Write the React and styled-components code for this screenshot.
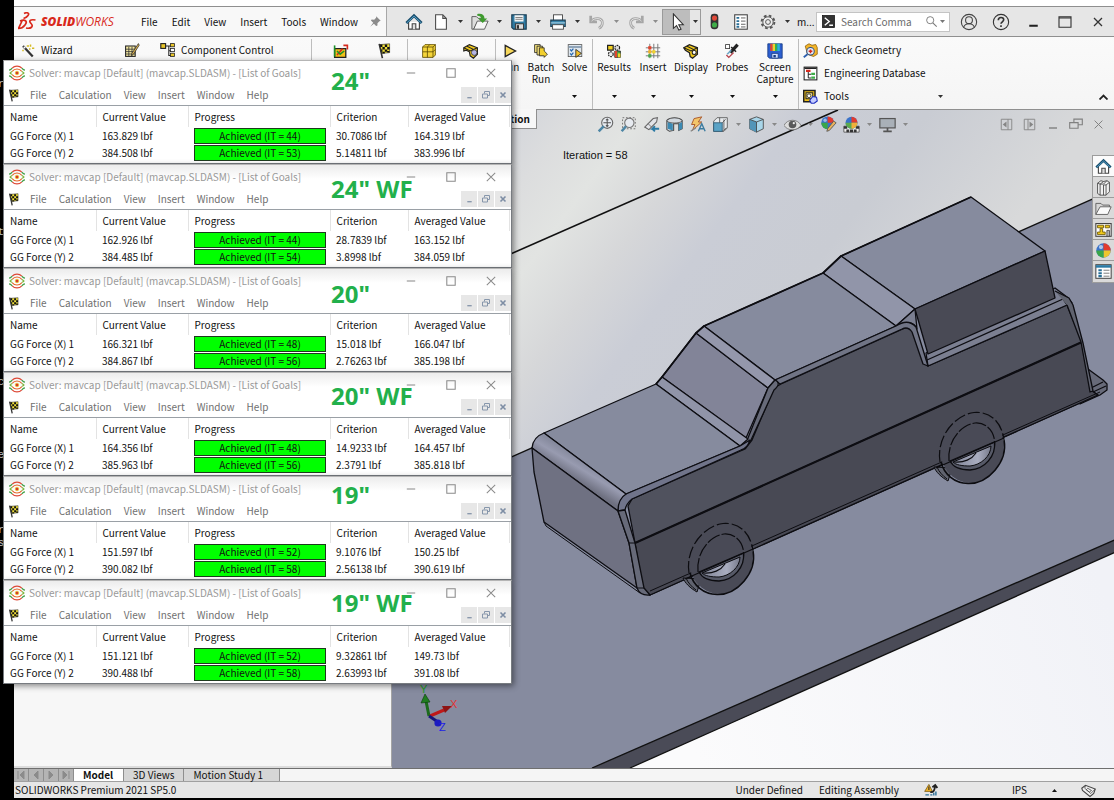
import React from "react";
import styled, { createGlobalStyle } from "styled-components";

const UI = '"Noto Sans CJK SC", "Open Sans", sans-serif';

const GlobalStyle = createGlobalStyle`
  *, *::before, *::after { box-sizing: border-box; }
  body { margin: 0; background: #000; font-family: ${UI}; color: #111; }
  button, input { font: inherit; color: inherit; }
`;

/* ---------- shared pieces ---------- */

const Bare = styled.button`
  display: inline-flex;
  align-items: center;
  justify-content: center;
  flex: none;
  padding: 0;
  border: 0;
  background: none;
  line-height: 12px;
  white-space: nowrap;
`;

const IconButton = styled(Bare)`
  width: ${(p) => p.$w || 24}px;
  height: ${(p) => p.$h || 26}px;
  background: ${(p) => p.$bg || "none"};
`;

const CaretButton = styled(Bare)`
  width: ${(p) => p.$w || 14}px;
  height: ${(p) => p.$h || 26}px;
  color: ${(p) => p.$tone || "#333"};
`;

const Svg = styled.svg`
  display: block;
  flex: none;
`;

const glyphs = {
  home: (
    <>
      <path d="M4 10v8h12v-8" fill="#fff" stroke="#444" strokeWidth="1.3" />
      <path d="M8 18v-6h4v6" fill="#ddd" stroke="#444" strokeWidth="1.2" />
      <path d="M1.5 11 10 3l8.500 8" fill="none" stroke="#1b4f6e" strokeWidth="3" />
      <path d="M2 11 10 3.500 18 11" fill="none" stroke="#5aa7cf" strokeWidth="1" />
    </>
  ),
  page: <path d="M4 2h8l4 4v12H4zM12 2v4h4" fill="#fff" stroke="#4a4a4a" strokeWidth="1.2" />,
  open: (
    <>
      <path d="M1 4h5l2 2h3v4H7l-4 8H1z" fill="#ddd" stroke="#555" />
      <path d="M3 18 7 9h12l-4 9z" fill="#f6f6f6" stroke="#555" />
      <path d="M7 1c5-1 8 1 8 5h3l-5 5-5-5h3c0-2-1-3-4-3z" fill="#3f9b2f" />
    </>
  ),
  save: (
    <>
      <path d="M2 2h16v16H4l-2-2z" fill="#2f7ba3" stroke="#1d3f54" strokeWidth="1.3" />
      <rect x="5" y="2.500" width="10" height="7" fill="#f4f4f4" />
      <path d="M6 5h8M6 7h8" stroke="#777" />
      <rect x="6" y="12" width="9" height="6" fill="#ddd" stroke="#333" />
      <rect x="7.500" y="13.500" width="2.500" height="4" fill="#333" />
    </>
  ),
  print: (
    <>
      <rect x="5" y="2" width="10" height="7" fill="#fff" stroke="#444" />
      <path d="M2 8h16v7H2z" fill="#3a86ad" stroke="#1d3f54" strokeWidth="1.3" />
      <path d="M2 11h16" stroke="#bfe0ee" />
      <rect x="4" y="13" width="12" height="5" fill="#fff" stroke="#444" />
    </>
  ),
  undo: (
    <>
      <path d="M3 3v7h7M4 9c3-4 12-4 12 2 0 3-2 5-4 6" fill="none" stroke="#a6a6a6" strokeWidth="3" />
      <path d="M4 9c3-4 12-4 12 2 0 3-2 5-4 6" fill="none" stroke="#e6e6e6" strokeWidth="1" />
    </>
  ),
  redo: (
    <>
      <path d="M17 3v7h-7M16 9C13 5 4 5 4 11c0 3 2 5 4 6" fill="none" stroke="#a6a6a6" strokeWidth="3" />
      <path d="M16 9C13 5 4 5 4 11c0 3 2 5 4 6" fill="none" stroke="#e6e6e6" strokeWidth="1" />
    </>
  ),
  cursor: <path d="M6 1v16l3.500-3 2.500 5 2.500-1-2.500-5H17z" fill="#fff" stroke="#333" strokeWidth="1.200" />,
  traffic: (
    <>
      <rect x="5.500" y="1" width="9" height="18" rx="4" fill="#333" />
      <circle cx="10" cy="6" r="3" fill="#e04a3a" />
      <circle cx="10" cy="14" r="3" fill="#3fae49" />
    </>
  ),
  list: (
    <>
      <rect x="3" y="2" width="14" height="16" fill="#fff" stroke="#444" strokeWidth="1.2" />
      <path d="M5 5.500h3M5 9h3M5 12.500h3M5 15.500h3" stroke="#2a6f97" strokeWidth="2" />
      <path d="M10 5.500h5M10 9h5M10 12.500h5M10 15.500h5" stroke="#555" />
    </>
  ),
  gear: (
    <>
      <circle cx="10" cy="10" r="8" fill="none" stroke="#555" strokeWidth="2.400" strokeDasharray="3.400 2.880" />
      <circle cx="10" cy="10" r="6.500" fill="#eee" stroke="#555" strokeWidth="1.200" />
      <circle cx="10" cy="10" r="3" fill="none" stroke="#555" strokeWidth="1.200" />
    </>
  ),
  pin: <path d="M11 2l7 7-2 .5-3 3 0 3.500-2 1-3.500-3.500L2 18l4.500-6L3 8.500 4 7l4 .2 3-3z" fill="#8b8b8b" />,
  search: (
    <>
      <circle cx="8" cy="8" r="5.500" fill="none" stroke="#777" strokeWidth="1.400" />
      <path d="M12 12l6 6" stroke="#777" strokeWidth="1.600" />
    </>
  ),
  prompt: (
    <>
      <rect x="2" y="2" width="16" height="16" fill="#333" stroke="#111" />
      <path d="M5 5l6 5-6 5M11 15h5" fill="none" stroke="#fff" strokeWidth="1.800" />
    </>
  ),
  user: (
    <>
      <circle cx="10" cy="10" r="8.500" fill="none" stroke="#444" strokeWidth="1.200" />
      <circle cx="10" cy="8" r="3.800" fill="none" stroke="#444" strokeWidth="1.200" />
      <path d="M4 16c1-3 3-4 6-4s5 1 6 4" fill="none" stroke="#444" strokeWidth="1.200" />
    </>
  ),
  help: (
    <>
      <circle cx="10" cy="10" r="8.500" fill="none" stroke="#333" strokeWidth="1.200" />
      <path d="M7 8c0-4 6-4 6-.5 0 2-3 2.500-3 4.500M10 13.500v2" fill="none" stroke="#333" strokeWidth="1.800" />
    </>
  ),
  minimize: <path d="M5 15h10" stroke="#222" strokeWidth="2.400" />,
  maximize: <path d="M2.500 3.500h15v13h-15zM2.500 5h15" fill="none" stroke="#333" strokeWidth="1.400" />,
  close: <path d="M5 5l10 10M15 5 5 15" stroke="#333" strokeWidth="1.600" />,
  wand: (
    <>
      <path d="M4 4l13 14" stroke="#333" strokeWidth="3" />
      <path d="M5 5l2 2" stroke="#fff" strokeWidth="2" />
      <path d="M9 4h3M14 2v3M16 7h3M12 8h2M3 10h2" stroke="#d4ba22" strokeWidth="2" />
    </>
  ),
  notes: (
    <>
      <rect x="2" y="5" width="12" height="13" fill="#f4e8a0" stroke="#222" strokeWidth="1.300" />
      <path d="M2 9h12M2 12h12M2 15h12M6 6v12M10 6v12" stroke="#333" />
      <path d="M18 2 10 14l-1 3 3-2 7-11z" fill="#e6b84a" stroke="#333" />
    </>
  ),
  tree: (
    <>
      <path d="M7 5h6M11 5v12h3M11 11h3" fill="none" stroke="#222" strokeWidth="1.300" />
      <rect x="1" y="2" width="6" height="6" fill="#e8c52a" stroke="#222" strokeWidth="1.400" />
      <rect x="13" y="2" width="5" height="4" fill="#e8c52a" stroke="#222" />
      <rect x="13" y="8" width="5" height="4" fill="#fff" stroke="#222" />
      <rect x="13" y="14" width="5" height="4" fill="#e8c52a" stroke="#222" />
    </>
  ),
  boxArrow: (
    <>
      <path d="M2 7h14v11H2z" fill="#f2c218" stroke="#222" strokeWidth="1.600" />
      <path d="M2 3v14" stroke="#1b8f2a" strokeWidth="2" />
      <path d="M5 15l7-8M13 3h5v5" fill="none" stroke="#d62a1e" strokeWidth="2" />
      <path d="M5 10l4 4 5-4" fill="none" stroke="#1b8f2a" strokeWidth="2" />
    </>
  ),
  flag: (
    <>
      <path d="M5 2l12-1v11L7 13z" fill="#f0e03a" stroke="#333" strokeWidth=".8" />
      <path d="M5 2h3v3H5zM11 2h3v3h-3zM8 5h3v3H8zM14 5h3v3h-3zM6 8h2v3H6zM11 8h3v3h-3zM8 11h3v2H8zM14 10h3v2h-3z" fill="#111" />
      <path d="M4 1l4 18" stroke="#333" strokeWidth="2" />
    </>
  ),
  mesh: (
    <>
      <path d="M2 5l3-3h13v13l-3 3H2z" fill="#f5d53a" stroke="#5c4a00" />
      <path d="M2 5h13v13M15 5l3-3M2 11h13l3-3M8 5v13M8 5l3-3" fill="none" stroke="#5c4a00" />
    </>
  ),
  part: (
    <>
      <path d="M1 6l7-4 10 4v8l-5 5-4-3-1-5-4-2-3 1z" fill="#f0c91c" stroke="#222" strokeWidth="1.500" />
      <path d="M1 6l8 4 9-4M5 4l8 4" fill="none" stroke="#222" strokeWidth="1.300" />
      <circle cx="14" cy="12" r="3.500" fill="#b4b4e4" stroke="#333" />
    </>
  ),
  play: <path d="M4 3l13 7-13 7z" fill="#f6d75a" stroke="#222" strokeWidth="1.600" />,
  batch: (
    <>
      <path d="M2 2h7v10H2z" fill="#f6e27a" stroke="#222" />
      <path d="M5 4h7v11H5z" fill="#f6e27a" stroke="#222" />
      <path d="M8 6h6v4l4 4-4 4v-2H8z" fill="#f2cf2e" stroke="#222" />
    </>
  ),
  solve: (
    <>
      <rect x="1.500" y="2" width="17" height="15" fill="#dfe7ee" stroke="#555" />
      <path d="M2 5h16" stroke="#7b93aa" strokeWidth="2" />
      <path d="M4 8l1.500 2L8 7M4 13l1.500 2L8 12" fill="none" stroke="#2467b0" strokeWidth="1.500" />
      <path d="M11 8l7 5-7 5z" fill="#f2bf2a" stroke="#222" />
    </>
  ),
  results: (
    <>
      <path d="M2 3h7v6H2z" fill="#f0cf22" stroke="#222" strokeWidth="1.500" />
      <circle cx="14" cy="6" r="3" fill="#ddd" stroke="#222" strokeWidth="1.500" strokeDasharray="2 1" />
      <circle cx="6" cy="14" r="3" fill="#eee" stroke="#222" strokeWidth="1.500" strokeDasharray="2 1" />
      <path d="M11 10h7v8h-7z" fill="#3fae49" stroke="#222" />
      <path d="M11 10h3v8h-3z" fill="#e2442e" />
      <path d="M15 13h3v5h-3z" fill="#f2d22a" />
    </>
  ),
  grid: (
    <>
      <path d="M1 6h18M1 11h18M1 16h18M6 1v18M11 1v18M16 1v18" stroke="#777" strokeWidth="1.200" />
      <path d="M4 4h4v4H4z" fill="#e2442e" />
      <path d="M4 9h4v4H4z" fill="#f2b52a" />
      <path d="M9 9h4v4H9z" fill="#f2d22a" />
      <path d="M4 14h4v4H4z" fill="#4aa84a" />
    </>
  ),
  block: (
    <>
      <path d="M1 6l7-4 10 4v8l-6 5-3-2-1-5-5-3z" fill="#f0c91c" stroke="#222" strokeWidth="1.600" />
      <path d="M1 6l9 4 8-4M5 4l8 4" fill="none" stroke="#222" strokeWidth="1.300" />
      <circle cx="14" cy="12" r="2.500" fill="#fff" stroke="#222" strokeWidth="1.300" />
    </>
  ),
  probe: (
    <>
      <path d="M17 2l-9 10" stroke="#222" strokeWidth="4" />
      <path d="M9 5l6 6" stroke="#222" strokeWidth="2" />
      <path d="M9 9l-5 5" stroke="#6aa5c4" strokeWidth="2" />
      <rect x="2" y="2" width="5" height="5" fill="#fff" stroke="#333" />
      <path d="M3 15l3 3 6-6" fill="none" stroke="#b6404a" strokeWidth="1.600" />
    </>
  ),
  floppy: (
    <>
      <path d="M1 1h18v18H3l-2-2z" fill="#2c5fd0" stroke="#173a80" />
      <path d="M4 1h3v9H4z" fill="#e2442e" />
      <path d="M7 1h3v9H7z" fill="#f2d22a" />
      <path d="M10 1h3v9h-3z" fill="#35b04a" />
      <path d="M13 1h3v9h-3z" fill="#29b6d8" />
      <path d="M6 13h8v6H6z" fill="#cfe0ff" stroke="#173a80" />
      <path d="M8 15h3v3H8z" fill="#173a80" />
    </>
  ),
  checkGeometry: (
    <>
      <path d="M3 4l5-3 4 2 5-1 2 4v9l-5 3-8-3z" fill="#f2b52a" stroke="#8a5a00" />
      <circle cx="10" cy="11" r="5" fill="#e8eef6" stroke="#2d4f80" strokeWidth="1.400" />
      <path d="M7.500 11h5M10 8.500v5" stroke="#d62a1e" strokeWidth="2" />
      <path d="M6 15l-5 4" stroke="#2d5fb0" strokeWidth="2.400" />
    </>
  ),
  database: (
    <>
      <rect x="1.500" y="1.500" width="17" height="17" fill="#fff" stroke="#222" strokeWidth="1.400" />
      <path d="M2 3h16" stroke="#222" strokeWidth="2" />
      <path d="M7 7v9h4M7 11h4" stroke="#222" fill="none" strokeWidth="1.300" />
      <path d="M4 5h6v3H4z" fill="#d62a1e" />
      <path d="M11 9h5v3h-5z" fill="#3fae49" />
      <path d="M11 14h5v3h-5z" fill="#3fae49" />
    </>
  ),
  toolbox: (
    <>
      <path d="M1 2h15v15H1z" fill="#f0c018" stroke="#222" strokeWidth="2" />
      <rect x="4" y="5" width="9" height="8" fill="#e9d98a" stroke="#222" strokeWidth="1.300" />
      <circle cx="8" cy="9" r="2.500" fill="#fff" stroke="#222" />
      <path d="M9 15l4-5 5 1 1 5-4 3h-4z" fill="#c4ccff" stroke="#2030c0" strokeWidth="1.500" />
    </>
  ),
  zoomFit: (
    <>
      <circle cx="12" cy="8" r="6.500" fill="#e7ebf0" stroke="#666" strokeWidth="1.300" />
      <path d="M8 12l-6 6" stroke="#4d86a5" strokeWidth="3" />
      <path d="M12 3.500v9M7.500 8h9M10.500 5 12 3.500 13.500 5M10.500 11l1.500 1.500 1.500-1.500" fill="none" stroke="#555" strokeWidth="1.200" />
    </>
  ),
  zoomArea: (
    <>
      <rect x="3" y="2" width="15" height="13" fill="none" stroke="#666" strokeDasharray="2 2" />
      <circle cx="11" cy="8" r="5.500" fill="#e7ebf0" stroke="#777" strokeWidth="1.300" />
      <path d="M7 12l-5 6" stroke="#4d86a5" strokeWidth="3" />
    </>
  ),
  previous: (
    <>
      <path d="M2 13 12 3l5-1-1 5-9 9z" fill="#e2e4e8" stroke="#666" strokeWidth="1.200" />
      <path d="M6 9l4 4" stroke="#666" />
      <path d="M19 15h-8l3-3M11 15l3 3" fill="none" stroke="#2b7aa5" strokeWidth="2.200" />
    </>
  ),
  section: (
    <>
      <path d="M1 5c4-4 14-4 18 0v10l-4 2V9H9v8l-5 1-3-2z" fill="#d2d9df" stroke="#444" strokeWidth="1.200" />
      <path d="M2 7l6 2v8l-6-2z" fill="#3b8ab3" />
      <path d="M15 9l4-2v8l-4 2z" fill="#3b8ab3" />
      <path d="M1 6c3 3 15 3 18 0" fill="none" stroke="#555" />
    </>
  ),
  dynamic: (
    <>
      <path d="M6 3l9-2-4 6h4L4 17l3-7H3z" fill="#f3c56a" stroke="#a24a20" strokeWidth="1" />
      <path d="M11 18l4-9 4 9M12 15h5" fill="none" stroke="#3b7ba0" strokeWidth="1.600" />
      <path d="M2 18l6-4" stroke="#888" strokeWidth="1.600" />
    </>
  ),
  viewBox: (
    <>
      <path d="M2 6l4-4h12v12l-4 4H2z" fill="#e8ebee" stroke="#555" />
      <rect x="2" y="8" width="10" height="10" fill="#5aa3c6" stroke="#2b5a75" />
      <path d="M12 8l4-4M12 18l5-4M9 2v6M14 4v12" stroke="#555" fill="none" />
    </>
  ),
  cube: (
    <>
      <path d="M2 4l8-3 8 3v11l-8 4-8-4z" fill="#a9d6ea" stroke="#444" />
      <path d="M2 4l8 3v12l-8-4z" fill="#5295b8" />
      <path d="M2 4l8 3 8-3M10 7v12" fill="none" stroke="#444" />
    </>
  ),
  eye: (
    <>
      <path d="M0 11c4-8 16-8 20 0-4 7-16 7-20 0z" fill="#ddd" stroke="#777" />
      <circle cx="10" cy="10" r="4.500" fill="#5a5a5a" />
      <circle cx="11.500" cy="8.500" r="1.300" fill="#eee" />
    </>
  ),
  ball: (
    <>
      <circle cx="10" cy="10" r="8.500" fill="#3a73c9" />
      <path d="M10 10V1.500a8.500 8.500 0 0 1 8.500 8.500z" fill="#e23a2e" />
      <path d="M10 10h8.500a8.500 8.500 0 0 1-8.500 8.500z" fill="#efc62c" />
      <path d="M10 10v8.500a8.500 8.500 0 0 1-8.500-8.500z" fill="#3aa648" />
      <circle cx="7" cy="6" r="2.500" fill="#fff" opacity=".6" />
    </>
  ),
  ballPen: (
    <>
      <circle cx="9" cy="8" r="7.500" fill="#3a73c9" />
      <path d="M9 8V.5A7.500 7.500 0 0 1 16.500 8z" fill="#e23a2e" />
      <path d="M9 8v7.500A7.500 7.500 0 0 1 1.500 8z" fill="#3aa648" />
      <circle cx="6" cy="5" r="2" fill="#fff" opacity=".5" />
      <path d="M19 8 11 17l-3 1 1-3 7-9z" fill="#e9b25c" stroke="#555" />
    </>
  ),
  ballScene: (
    <>
      <path d="M1 12h18v7H1z" fill="#eee" stroke="#555" />
      <path d="M1 12h4v3H1zM8 16h4v3H8zM15 12h4v3h-4zM4 16h3v3H4zM13 16h3v3h-3z" fill="#333" />
      <circle cx="10" cy="8" r="7" fill="#3a73c9" />
      <path d="M10 8V1a7 7 0 0 1 7 7z" fill="#e23a2e" />
      <path d="M3 8h14a7 7 0 0 1-14 0z" fill="#5caa4c" />
      <path d="M10 8h7a7 7 0 0 1-7 7z" fill="#efb03c" />
    </>
  ),
  monitor: (
    <>
      <rect x="1" y="3" width="18" height="11" fill="#a9b0b8" stroke="#555" strokeWidth="1.400" />
      <path d="M10 14v4M5 18h10" stroke="#555" strokeWidth="2" />
    </>
  ),
  paneLeft: (
    <>
      <path d="M3 3h14v14H3zM12 3v14" fill="none" stroke="#858585" strokeWidth="1.200" />
      <path d="M10 6l-5 4 5 4z" fill="#858585" />
    </>
  ),
  paneRight: (
    <>
      <path d="M3 3h14v14H3zM8 3v14" fill="none" stroke="#858585" strokeWidth="1.200" />
      <path d="M10 6l5 4-5 4z" fill="#858585" />
    </>
  ),
  docMin: <path d="M5 15h10" stroke="#777" strokeWidth="1.600" />,
  restore: <path d="M7 8V3h12v8h-6M1 8h12v8H1z" fill="none" stroke="#808080" strokeWidth="1.600" />,
  docClose: <path d="M4 4l12 12M16 4 4 16" stroke="#808080" strokeWidth="1.500" />,
  books: (
    <>
      <path d="M3 5l4-3 3 1 4-1 3 2v11l-4 4H6l-3-2z" fill="#f1f1f1" stroke="#444" />
      <path d="M6 6v13M3 5l3 1 4-3M10 7v12M6 6h4l4-4M13 7v12M10 7l3 0 4-3" fill="none" stroke="#444" />
    </>
  ),
  folder: (
    <>
      <path d="M1 17V4h6l2 2h8v3" fill="#d6d6d6" stroke="#555" />
      <path d="M1 17 6 8h13l-4 9z" fill="#fafafa" stroke="#555" />
    </>
  ),
  palette: (
    <>
      <rect x="1" y="3" width="18" height="15" fill="#fff" stroke="#444" strokeWidth="1.300" />
      <path d="M3 5h7v3H3zM12 5h5v3h-5zM6 9h3v4h3v3H3v-3h3z" fill="#f0c91c" stroke="#6b5600" />
      <path d="M14 11h3v7h-3z" fill="#bbb" stroke="#444" />
    </>
  ),
  properties: (
    <>
      <rect x="1" y="2" width="18" height="16" fill="#fff" stroke="#444" strokeWidth="1.200" />
      <path d="M1 4h18" stroke="#2a7aa5" strokeWidth="3" />
      <path d="M4 8.500h4M4 12h4M4 15.500h4" stroke="#2a6f97" strokeWidth="2.500" />
      <path d="M10 8.500h7M10 12h7M10 15.500h7" stroke="#666" />
    </>
  ),
  goals: (
    <>
      <path d="M4 4c3-3.500 9-3.500 12 0M4 16c3 3.500 9 3.500 12 0" fill="none" stroke="#dd4a38" strokeWidth="1.600" />
      <path d="M0 6.500c2 0 2 0 4-2.500M20 6.500c-2 0-2 0-4-2.500M0 13.500c2 0 2 0 4 2.500M20 13.500c-2 0-2 0-4 2.500" fill="none" stroke="#3f9f46" strokeWidth="1.600" />
      <path d="M4 8c3-4 9-4 12 0M4 12c3 4 9 4 12 0" fill="none" stroke="#e4662c" strokeWidth="1.400" />
      <path d="M1 10c1-1 2-1 3-2M19 10c-1-1-2-1-3-2M1 10c1 1 2 1 3 2M19 10c-1 1-2 1-3 2" fill="none" stroke="#7fb53c" strokeWidth="1.400" />
      <circle cx="10" cy="10" r="2.200" fill="#d7382c" stroke="#e9c52c" />
    </>
  ),
  childMin: <path d="M6 14h8" stroke="#8696ab" strokeWidth="2.400" />,
  childRestore: <path d="M7 7V3h10v8h-4M3 8h10v8H3z" fill="none" stroke="#8696ab" strokeWidth="2" />,
  childClose: <path d="M5 5l10 10M15 5 5 15" stroke="#7d8da4" strokeWidth="3.200" />,
  thinMin: <path d="M3 10h14" stroke="#8a8a8a" strokeWidth="1.700" />,
  thinMax: <path d="M4 4h12v12H4z" fill="none" stroke="#8a8a8a" strokeWidth="1.500" />,
  thinClose: <path d="M3 3l14 14M17 3 3 17" stroke="#8a8a8a" strokeWidth="1.700" />,
  rebuild: (
    <>
      <path d="M1 12 7 2l5 10z" fill="#f2b52a" stroke="#6a4a00" />
      <path d="M7 5v5" stroke="#222" strokeWidth="1.500" />
      <path d="M9 13c5 1 6-3 7-9M12 6l4-3 3 4" fill="none" stroke="#222" strokeWidth="2.600" />
      <path d="M2 17h5M9 17h3M14 14v4M17 12v6" stroke="#2a6f97" strokeWidth="2" />
    </>
  ),
  tag: (
    <>
      <path d="M1 7l5-4 13 5-2 6-5 4L2 10z" fill="#eee" stroke="#444" strokeWidth="1.400" />
      <path d="M6 3l-1 4 8 7 6-6M9 7l5 3-3 2-4-3z" fill="none" stroke="#444" />
    </>
  ),
};

const Glyph = ({ name, size = 18 }) => (
  <Svg width={size} height={size} viewBox="0 0 20 20" aria-hidden="true">
    {glyphs[name]}
  </Svg>
);

const Caret = ({ up }) => (
  <Svg width="5" height="3" viewBox="0 0 5 3" aria-hidden="true">
    <path d={up ? "M0 3h5L2.500 0z" : "M0 0h5L2.500 3z"} fill="currentColor" />
  </Svg>
);

/* ---------- frame ---------- */

const Desktop = styled.div`
  position: relative;
  min-height: 100vh;
  padding: 0 0 2px 14px;
  background: #000;
  font-size: 10px;
  line-height: 12px;
`;

const Frame = styled.div`
  display: flex;
  flex-direction: column;
  min-height: calc(100vh - 2px);
  background: #f7f7f7;
`;

const TopStrip = styled.div`
  height: 6px;
  background: #fff;
`;

const TitleBar = styled.header`
  display: flex;
  align-items: center;
  height: 31px;
  border-top: 1px solid #8f8f8f;
  border-bottom: 1px solid #8f8f8f;
  background: #e6e6e6;
`;

const Brand = styled.div`
  display: flex;
  align-items: center;
  align-self: stretch;
  width: 373px;
  flex: none;
  padding-left: 4px;
  border-right: 1px solid #a8a8a8;
  background: #f8f8f8;
`;

const Wordmark = styled.div`
  width: 80px;
  margin-left: 4px;
  font: italic 400 12px/16px "Open Sans", sans-serif;
  color: #d9291c;
  b { font-weight: 800; }
`;

const MenuBar = styled.nav`
  display: flex;
  gap: ${(p) => p.$gap}px;
  padding-left: ${(p) => p.$start}px;
`;

const PinButton = styled(Bare)`
  margin-left: auto;
  width: 22px;
`;

const Tools = styled.div`
  display: flex;
  align-items: center;
  flex: 1;
  min-width: 0;
  padding-left: 15px;
`;

const ToolGroup = styled.div`
  display: flex;
  margin-right: ${(p) => (p.$gap === undefined ? 1 : p.$gap)}px;
  border: ${(p) => (p.$boxed ? "1px solid #9a9a9a" : "0")};
`;

const DocTitle = styled.div`
  flex: 1;
  min-width: 0;
  padding-left: 3px;
  white-space: nowrap;
`;

const SearchBox = styled.label`
  display: flex;
  align-items: center;
  gap: 2px;
  width: 134px;
  height: 20px;
  flex: none;
  padding: 0 4px;
  margin-right: 3px;
  border: 1px solid #c4c4c4;
  background: #fff;
  color: #777;
  input {
    flex: 1;
    min-width: 0;
    padding: 0 0 0 3px;
    border: 0;
    outline: 0;
    background: none;
    &::placeholder { color: #6b6b6b; opacity: 1; }
  }
`;

/* ---------- ribbon ---------- */

const Ribbon = styled.div`
  display: flex;
  height: 73px;
  flex: none;
  padding-top: 2px;
  border-bottom: 1px solid #8f8f8f;
  background: linear-gradient(#fafafa, #f5f5f5);
`;

const RibbonGroup = styled.div`
  display: flex;
  flex: none;
  width: ${(p) => p.$w}px;
  padding-left: ${(p) => p.$pad || 0}px;
  border-right: 1px solid #bdbdbd;
`;

const RibbonRow = styled(Bare)`
  gap: ${(p) => p.$gap || 5}px;
  height: 22px;
  justify-content: flex-start;
  width: ${(p) => (p.$w ? p.$w + "px" : "auto")};
`;

const RibbonTile = styled(Bare)`
  flex-direction: column;
  justify-content: flex-start;
  width: ${(p) => p.$w}px;
  height: 68px;
  padding-top: 4px;
  gap: 2px;
  white-space: normal;
`;

const TileLabel = styled.span`
  height: 24px;
  margin-bottom: 8px;
  text-align: center;
`;

const RibbonList = styled.div`
  display: flex;
  flex-direction: column;
  gap: 1px;
  padding-left: 4px;
`;

const ToolsRow = styled.div`
  display: flex;
  justify-content: space-between;
  width: 142px;
`;

const Collapse = styled(Bare)`
  align-self: flex-end;
  width: 22px;
  height: 24px;
  margin-left: auto;
`;

/* ---------- workspace ---------- */

const Workspace = styled.main`
  position: relative;
  display: flex;
  flex: 1;
  min-height: 640px;
`;

const FeaturePane = styled.aside`
  width: 378px;
  flex: none;
  border-right: 1px solid #a5a5a5;
  border-bottom: 2px solid #dcdcdc;
  background: #f7f7f7;
`;

const RibbonTab = styled.button`
  position: absolute;
  top: -1px;
  left: 422px;
  width: 101px;
  height: 20px;
  padding: 0 6px;
  border: 1px solid #8f8f8f;
  border-top: 0;
  background: #f7f7f7;
  font-weight: 700;
  text-align: right;
  white-space: nowrap;
`;

const Viewport = styled.section`
  position: relative;
  flex: 1;
  min-width: 0;
  overflow: hidden;
`;

const Scene = styled.svg`
  position: absolute;
  inset: 0;
  width: 100%;
  height: 100%;
`;

const HeadsUp = styled.div`
  position: relative;
  display: flex;
  align-items: center;
  height: 28px;
  padding: 0 4px 0 202px;
`;

const DocControls = styled.div`
  display: flex;
  margin-left: auto;
`;

const Iteration = styled.div`
  position: relative;
  padding: 11px 0 0 171px;
  font: 11px/12px "Liberation Sans", Arial, sans-serif;
  color: #111;
`;

const TaskPane = styled.div`
  position: absolute;
  top: 45px;
  right: 0;
  display: flex;
  flex-direction: column;
  width: 22px;
  border: 1px solid #9c9c9c;
  border-right: 0;
`;

const TaskButton = styled(Bare)`
  height: 21px;
  border-bottom: 1px solid #9c9c9c;
  background: ${(p) => (p.$active ? "#fbfbfb" : "#dadada")};
  &:last-child { border-bottom: 0; }
`;

/* ---------- bottom bars ---------- */

const TabStrip = styled.div`
  display: flex;
  height: 14px;
  flex: none;
  border-top: 1px solid #6f6f6f;
  border-bottom: 1px solid #a0a0a0;
  background: #f5f5f5;
`;

const Pager = styled(Bare)`
  width: 15px;
  border-right: 1px solid #8e8e8e;
  background: #b4b4b4;
  color: #8b8b8b;
`;

const SheetTab = styled(Bare)`
  justify-content: flex-start;
  min-width: ${(p) => p.$w}px;
  padding: 0 9px;
  border-right: 1px solid #8e8e8e;
  background: ${(p) => (p.$active ? "#fff" : "#d6d6d6")};
  font-weight: ${(p) => (p.$active ? 700 : 400)};
`;

const StatusBar = styled.footer`
  display: flex;
  align-items: center;
  height: 16px;
  flex: none;
  padding: 0 4px 0 1px;
  background: #e6e6e6;
`;

const StatusItem = styled.span`
  margin-left: ${(p) => p.$ml || 0}px;
`;

const Spacer = styled.span`
  flex: 1;
`;

/* ---------- solver windows ---------- */

const SolverStack = styled.div`
  position: absolute;
  top: 60px;
  left: 3px;
  width: 509px;
`;

const SolverWindow = styled.section`
  position: relative;
  height: 104px;
  border: 1px solid #777b80;
  border-top-color: #b5b5b5;
  background: #fff;
  box-shadow: 2px 2px 6px rgba(0, 0, 0, 0.45);
`;

const SolverTitle = styled.div`
  display: flex;
  align-items: center;
  height: 24px;
  padding-left: 5px;
  color: #999;
  background: ${(p) => (p.$shaded ? "linear-gradient(#ececec, #fff 14px)" : "#fff")};
`;

const TitleText = styled.h2`
  flex: 1;
  margin: 0 0 0 4px;
  font-size: 10px;
  line-height: 12px;
  font-weight: 400;
  white-space: nowrap;
`;

const SolverMenu = styled.div`
  display: flex;
  align-items: center;
  height: 21px;
  padding-left: 3px;
  border-bottom: 1px solid #9aa0a6;
  color: #707070;
`;

const ChildButtons = styled.div`
  display: flex;
  gap: 1px;
  margin-left: auto;
`;

const GoalTable = styled.table`
  width: 505px;
  table-layout: fixed;
  border-collapse: collapse;
  color: #111;
  th, td { padding: 0 0 0 6px; text-align: left; font-weight: 400; white-space: nowrap; }
  th { height: 21px; border-right: 1px solid #e3e3e3; }
  td { height: 17px; }
`;

const Progress = styled.div`
  width: 132px;
  height: 16px;
  border: 1px solid #1d3a1d;
  background: #00ff00;
  line-height: 13px;
  text-align: center;
`;

const Annotation = styled.div`
  position: absolute;
  top: ${(p) => p.$top}px;
  left: 327px;
  font: 700 24px/24px "Noto Sans", "Open Sans", sans-serif;
  color: #22b04b;
`;

const EdgeText = styled.div`
  position: absolute;
  top: ${(p) => p.$y}px;
  left: 0;
  width: 4px;
  overflow: hidden;
  direction: rtl;
  color: #cfcfcf;
  font: 10px/12px "Liberation Mono", monospace;
`;

const runs = [
  { label: '24"', top: 8, rows: [["163.829", "44", "30.7086", "164.319"], ["384.508", "53", "5.14811", "383.996"]] },
  { label: '24" WF', top: 12, rows: [["162.926", "44", "28.7839", "163.152"], ["384.485", "54", "3.8998", "384.059"]] },
  { label: '20"', top: 13, rows: [["166.321", "48", "15.018", "166.047"], ["384.867", "56", "2.76263", "385.198"]] },
  { label: '20" WF', top: 11, rows: [["164.356", "48", "14.9233", "164.457"], ["385.963", "56", "2.3791", "385.818"]] },
  { label: '19"', top: 6, rows: [["151.597", "52", "9.1076", "150.25"], ["390.082", "58", "2.56138", "390.619"]] },
  { label: '19" WF', top: 10, rows: [["151.121", "52", "9.32861", "149.73"], ["390.488", "58", "2.63993", "391.08"]] },
];

const goalNames = ["GG Force (X) 1", "GG Force (Y) 2"];

/* fragments of a console that shows behind the windows */
const consoleEdge = [[79, "r"], [227, "t"], [377, "c"], [450, "e"], [525, "r"], [538, "s"]];

function Solver({ run, shaded }) {
  return (
    <SolverWindow>
      <SolverTitle $shaded={shaded}>
        <Glyph name="goals" size={16} />
        <TitleText>Solver: mavcap [Default] (mavcap.SLDASM) - [List of Goals]</TitleText>
        <IconButton $w={40} $h={24} aria-label="Minimize"><Glyph name="thinMin" size={12} /></IconButton>
        <IconButton $w={40} $h={24} aria-label="Maximize"><Glyph name="thinMax" size={14} /></IconButton>
        <IconButton $w={40} $h={24} aria-label="Close"><Glyph name="thinClose" size={12} /></IconButton>
      </SolverTitle>
      <SolverMenu>
        <Glyph name="flag" size={13} />
        <MenuBar $gap={12} $start={10}>
          {["File", "Calculation", "View", "Insert", "Window", "Help"].map((m) => <Bare key={m}>{m}</Bare>)}
        </MenuBar>
        <ChildButtons>
          <IconButton $w={16} $h={16} $bg="#e7e7e7" aria-label="Minimize child"><Glyph name="childMin" size={11} /></IconButton>
          <IconButton $w={16} $h={16} $bg="#e7e7e7" aria-label="Restore child"><Glyph name="childRestore" size={10} /></IconButton>
          <IconButton $w={16} $h={16} $bg="#e7e7e7" aria-label="Close child"><Glyph name="childClose" size={10} /></IconButton>
        </ChildButtons>
      </SolverMenu>
      <GoalTable>
        <colgroup>
          <col width="92" /><col width="92" /><col width="142" /><col width="78" /><col width="101" />
        </colgroup>
        <thead>
          <tr>
            <th>Name</th><th>Current Value</th><th>Progress</th><th>Criterion</th><th>Averaged Value</th>
          </tr>
        </thead>
        <tbody>
          {run.rows.map(([current, it, criterion, average], i) => (
            <tr key={goalNames[i]}>
              <td>{goalNames[i]}</td>
              <td>{current} lbf</td>
              <td><Progress>Achieved (IT = {it})</Progress></td>
              <td>{criterion} lbf</td>
              <td>{average} lbf</td>
            </tr>
          ))}
        </tbody>
      </GoalTable>
      <Annotation $top={run.top}>{run.label}</Annotation>
    </SolverWindow>
  );
}

/* ---------- 3D scene ---------- */

function Wheel({ x, y }) {
  return (
    <g transform={`translate(${x} ${y})`} fill="none" stroke="#0c0c10">
      <path d="M-38 19C-36 24-31 29-24 33L-20 20z" fill="#60636f" />
      <path d="M-35 19C-33 24-29 28-25 31" />
      <ellipse rx="31.500" ry="35" transform="rotate(14)" fill="#494a56" stroke="none" />
      <path d="M32 -8C36 14 16 36-4 35.500-18 35-28 26-31 14" strokeWidth="1.600" />
      <path d="M-32 14C-36-10-18-33 2-35.500 20-37 30-24 32-8" strokeWidth="1.200" strokeDasharray="12 3" />
      <path d="M-23 13C-25-6-12-23 3-25 16-26 24-14 22.500-2" strokeWidth="1.200" strokeDasharray="14 2" />
      <path d="M22.500-6C24 8 13 21-2 22-12 22-19 19-22 13z" fill="#565967" strokeWidth="1.300" />
      <path d="M-19 14 19-2C19 8 9 17-2 18-10 18-16 17-19 14z" fill="url(#rim)" />
      <path d="M-18 14C-8 15 0 11 4 5" strokeWidth="1.200" />
      <path d="M-36 20 32-10" strokeWidth="1.300" />
    </g>
  );
}

function Truck() {
  return (
    <Scene viewBox="392 110 722 658" preserveAspectRatio="xMinYMin slice" role="img" aria-label="Truck with camper shell">
      <defs>
        <linearGradient id="sky" gradientUnits="userSpaceOnUse" x1="430" y1="110" x2="860" y2="430">
          <stop offset="0" stopColor="#c6cad6" />
          <stop offset=".22" stopColor="#dcddde" />
          <stop offset=".32" stopColor="#e2e4e2" />
          <stop offset=".44" stopColor="#d6d7d9" />
          <stop offset=".56" stopColor="#cacdd6" />
          <stop offset=".75" stopColor="#c9ccd3" />
          <stop offset="1" stopColor="#d8d9da" />
        </linearGradient>
        <linearGradient id="floor" gradientUnits="userSpaceOnUse" x1="700" y1="768" x2="1114" y2="620">
          <stop offset="0" stopColor="#fbfbfc" />
          <stop offset="1" stopColor="#f1f2f7" />
        </linearGradient>
        <linearGradient id="noseRound" gradientUnits="userSpaceOnUse" x1="586" y1="462" x2="575" y2="480">
          <stop offset="0" stopColor="#868a9d" />
          <stop offset=".4" stopColor="#989bb0" />
          <stop offset="1" stopColor="#6e7080" />
        </linearGradient>
        <linearGradient id="rim">
          <stop offset="0" stopColor="#7f8395" />
          <stop offset=".65" stopColor="#a9adc0" />
          <stop offset="1" stopColor="#777a8b" />
        </linearGradient>
      </defs>
      <rect x="392" y="110" width="1200" height="1000" fill="url(#sky)" />
      <path d="M392 306 838 110" stroke="#111" strokeWidth="1.600" />

      <path d="M392 510 1300 107V900H392z" fill="#868b9f" />
      <path d="M392 510 1300 107" stroke="#111" strokeWidth="1.400" />
      <path d="M592 768 1300 459V1100H592z" fill="#4a4b57" />
      <path d="M630 768 1300 470V1100H630z" fill="url(#floor)" />
      <path d="M592 768 1300 459" stroke="#111" strokeWidth="1.300" />
      <path d="M630 768 1300 470" stroke="#111" strokeWidth="1.300" />

      <g stroke="#0d0d12" strokeWidth="1.300" strokeLinejoin="round">
        {/* rear bumper */}
        <path d="M1088 369 1103 380 1107 384V390L1100 395 1080 404z" fill="#676a79" />
        <path d="M1091 388 1103 382M1093 392 1106 386" fill="none" />
        {/* hull of the body side */}
        <path d="M628 506 632 499 745 449 752 440 774 388 781 384 905 328Q913 325 917 334L928 366 1067 305 1082 342 1092 391 1098 395 650 595 643 590 635 543z" fill="#50525e" />
        <path d="M635 543 1082 342 1092 391 1098 395 650 595 643 590z" fill="#484954" />
        <path d="M635 543 1082 342" strokeWidth="2.200" />
        <path d="M650 591 1100 392" fill="none" strokeWidth="1" />
        {/* bed rail and tail */}
        <path d="M928 366 926 353 1055 288 1067 297 1072 303 1067 305z" fill="#7b7f91" />
        <path d="M927 360 1063 299 1067 305" fill="none" />
        <path d="M1055 291 1069 298 1073 305 1083 343 1093 391 1090 392 1081 342 1067 305" fill="#60636f" />
        {/* camper shell */}
        <path d="M971 197 1045 251 915 309 841 256z" fill="#868b9e" />
        <path d="M915 309 1045 251 1055 298 928 354z" fill="#494a55" />
        <path d="M841 256 915 309 896 326 823 273z" fill="#9195a9" />
        <path d="M915 309 896 326Q912 318 917 329z" fill="#7b7f91" />
        {/* roof and its side edge */}
        <path d="M704 326 823 273 896 326 775 380z" fill="#868b9e" />
        <path d="M775 380 896 326Q908 318 916 327L928 366 923 364 912 332Q908 326 902 329L780 384z" fill="#707485" />
        {/* windscreen */}
        <path d="M696 333 768 388 746 438 662 377z" fill="#828498" />
        <path d="M704 326 775 380 768 388 696 333z" fill="#9497ab" />
        <path d="M768 388 775 380Q782 383 774 390L751 440Q746 448 740 446L748 438z" fill="#676a79" />
        <path d="M662 377 748 439 740 446 656 384z" fill="#9094a8" />
        {/* hood */}
        <path d="M544 433 656 384 740 446 626 494z" fill="#868b9e" />
        <path d="M626 494 740 446 750 440Q747 449 741 450L632 499Q626 504 625 510L618 511Q617 498 626 494z" fill="#70748a" />
        <path d="M532 448Q533 437 544 433L626 494Q618 499 618 511z" fill="url(#noseRound)" />
        {/* front face */}
        <path d="M532 448 618 511 629 543 637 588 544 522 534 472z" fill="#6f7182" />
        <path d="M618 511 625 510 635 543 644 588 650 595Q640 596 637 588L629 543z" fill="#676a79" />
        <path d="M629 543H635M544 522 546 526 640 593M637 588H644" fill="none" strokeWidth="1" />
        <path d="M656 384 662 377 696 333 704 326 823 273 841 256 971 197" fill="none" strokeWidth="1.800" />
      </g>

      <Wheel x={721} y={559} />
      <Wheel x={972} y={448} />

      {/* orientation triad */}
      <g fontFamily="Liberation Sans, Arial, sans-serif" fontSize="11">
        <path d="M429 716 426 701" stroke="#1c6b1c" strokeWidth="3" />
        <path d="M421 703 425 694 430 702z" fill="#1f7d1f" stroke="#0c3a0c" strokeWidth=".6" />
        <path d="M430 716 444 710" stroke="#c01818" strokeWidth="3" />
        <path d="M442 706 452 706 445 713z" fill="#8e1414" />
        <path d="M429 716 438 722" stroke="#16167a" strokeWidth="3" />
        <circle cx="438" cy="723" r="3.600" fill="#1c1cc0" />
        <text x="420" y="693" fill="#1f9a1f">Y</text>
        <text x="450" y="708" fill="#e03434">X</text>
        <text x="439" y="731" fill="#2222e6">Z</text>
      </g>
    </Scene>
  );
}

/* ---------- data for the bars ---------- */

const fileTools = [
  ["home", "Home", false, 3],
  ["page", "New", true],
  ["open", "Open", true],
  ["save", "Save", true],
  ["print", "Print", true],
  ["undo", "Undo", true],
  ["redo", "Redo", true, 0],
];

const viewTools = [
  ["zoomFit", false], ["zoomArea", false], ["previous", false], ["section", false], ["dynamic", false],
  ["viewBox", true], ["cube", true], ["eye", true], ["ballPen", false], ["ballScene", true], ["monitor", true],
];

const tiles = [
  ["results", "Results", 42], ["grid", "Insert", 36], ["block", "Display", 40], ["probe", "Probes", 42], ["floppy", "Screen Capture", 44],
];

const pagers = ["M2 1v8M8 1 4 5l4 4z", "M7 1 3 5l4 4z", "M3 1l4 4-4 4z", "M2 1l4 4-4 4zM8 1v8"];

export default function App() {
  return (
    <Desktop>
      <GlobalStyle />
      <Frame>
        <TopStrip />
        <TitleBar>
          <Brand>
            <Svg width="19" height="19" viewBox="0 0 19 19" aria-hidden="true">
              <path d="M6 1.500c3-1.500 6-.5 4 2C9 5 7 6 5.500 6.500M2 9c5-2 8 0 5 4-1.500 2-4 3.500-6.500 3.500L4 9M17.500 8C12 7 10.500 9 13 11.500 16 14.500 13 17 8 16" fill="none" stroke="#d9291c" strokeWidth="1.700" />
            </Svg>
            <Wordmark><b>SOLID</b>WORKS</Wordmark>
            <MenuBar $gap={14} $start={20}>
              {["File", "Edit", "View", "Insert", "Tools", "Window"].map((m) => <Bare key={m}>{m}</Bare>)}
            </MenuBar>
            <PinButton aria-label="Pin menu"><Glyph name="pin" size={13} /></PinButton>
          </Brand>
          <Tools>
            {fileTools.map(([icon, label, caret, gap]) => (
              <ToolGroup key={icon} $gap={gap}>
                <IconButton aria-label={label}><Glyph name={icon} /></IconButton>
                {caret && <CaretButton aria-label={label + " options"} $tone={gap === 0 || icon === "undo" ? "#8d8d8d" : "#333"}><Caret /></CaretButton>}
              </ToolGroup>
            ))}
            <ToolGroup $boxed>
              <IconButton $w={27} $h={24} $bg="#bdbdbd" aria-label="Select"><Glyph name="cursor" /></IconButton>
              <CaretButton $w={10} $h={24} aria-label="Select options"><Caret /></CaretButton>
            </ToolGroup>
            <ToolGroup $gap={3}><IconButton aria-label="Rebuild"><Glyph name="traffic" size={17} /></IconButton></ToolGroup>
            <ToolGroup $gap={3}><IconButton aria-label="File properties"><Glyph name="list" /></IconButton></ToolGroup>
            <ToolGroup $gap={0}>
              <IconButton aria-label="Options"><Glyph name="gear" size={16} /></IconButton>
              <CaretButton aria-label="Options menu"><Caret /></CaretButton>
            </ToolGroup>
            <DocTitle>m...</DocTitle>
            <SearchBox>
              <Glyph name="prompt" size={15} />
              <input type="search" placeholder="Search Commands" aria-label="Search Commands" />
              <Glyph name="search" size={13} />
              <Caret />
            </SearchBox>
            <IconButton $w={32} aria-label="Account"><Glyph name="user" /></IconButton>
            <IconButton $w={32} aria-label="Help"><Glyph name="help" /></IconButton>
            <IconButton $w={32} aria-label="Minimize"><Glyph name="minimize" size={17} /></IconButton>
            <IconButton $w={32} aria-label="Maximize"><Glyph name="maximize" size={16} /></IconButton>
            <IconButton $w={33} aria-label="Close"><Glyph name="close" size={16} /></IconButton>
          </Tools>
        </TitleBar>

        <Ribbon>
          <RibbonGroup $w={298} $pad={6}>
            <RibbonRow $w={104} $gap={6}><Glyph name="wand" size={15} />Wizard</RibbonRow>
            <RibbonRow $w={36} aria-label="Notes"><Glyph name="notes" size={16} /></RibbonRow>
            <RibbonRow><Glyph name="tree" size={16} />Component Control</RibbonRow>
          </RibbonGroup>
          <RibbonGroup $w={96} $pad={8}>
            <RibbonTile $w={42} aria-label="Flow project"><Glyph name="boxArrow" size={16} /></RibbonTile>
            <RibbonTile $w={44} aria-label="Goals"><Glyph name="flag" size={16} /></RibbonTile>
          </RibbonGroup>
          <RibbonGroup $w={88}>
            <RibbonTile $w={42} aria-label="Mesh"><Glyph name="mesh" size={16} /></RibbonTile>
            <RibbonTile $w={42} aria-label="Part"><Glyph name="part" size={16} /></RibbonTile>
          </RibbonGroup>
          <RibbonGroup $w={97}>
            <RibbonTile $w={28}><Glyph name="play" size={16} /><TileLabel>Run</TileLabel></RibbonTile>
            <RibbonTile $w={34}><Glyph name="batch" size={16} /><TileLabel>Batch Run</TileLabel></RibbonTile>
            <RibbonTile $w={33}><Glyph name="solve" size={16} /><TileLabel>Solve</TileLabel><Caret /></RibbonTile>
          </RibbonGroup>
          <RibbonGroup $w={206}>
            {tiles.map(([icon, label, w]) => (
              <RibbonTile key={icon} $w={w}><Glyph name={icon} size={16} /><TileLabel>{label}</TileLabel><Caret /></RibbonTile>
            ))}
          </RibbonGroup>
          <RibbonList>
            <RibbonRow $gap={6}><Glyph name="checkGeometry" size={15} />Check Geometry</RibbonRow>
            <RibbonRow $gap={6}><Glyph name="database" size={15} />Engineering Database</RibbonRow>
            <ToolsRow>
              <RibbonRow $gap={6}><Glyph name="toolbox" size={15} />Tools</RibbonRow>
              <CaretButton $w={9} $h={22} aria-label="Tools menu"><Caret /></CaretButton>
            </ToolsRow>
          </RibbonList>
          <Collapse aria-label="Collapse ribbon">
            <Svg width="9" height="6" viewBox="0 0 9 6"><path d="M.5 5.500l4-4 4 4" fill="none" stroke="#222" strokeWidth="1.800" /></Svg>
          </Collapse>
        </Ribbon>

        <Workspace>
          <FeaturePane />
          <Viewport>
            <Truck />
            <HeadsUp>
              {viewTools.map(([icon, caret]) => (
                <ToolGroup key={icon} $gap={0}>
                  <IconButton $w={23} aria-label={icon}><Glyph name={icon} size={17} /></IconButton>
                  {caret && <CaretButton $w={13} $tone="#888" aria-label={icon + " options"}><Caret /></CaretButton>}
                </ToolGroup>
              ))}
              <DocControls>
                <IconButton $w={23} aria-label="Show left pane"><Glyph name="paneLeft" size={15} /></IconButton>
                <IconButton $w={23} aria-label="Show right pane"><Glyph name="paneRight" size={15} /></IconButton>
                <IconButton $w={23} aria-label="Minimize document"><Glyph name="docMin" size={16} /></IconButton>
                <IconButton $w={23} aria-label="Restore document"><Glyph name="restore" size={14} /></IconButton>
                <IconButton $w={23} aria-label="Close document"><Glyph name="docClose" size={13} /></IconButton>
              </DocControls>
            </HeadsUp>
            <Iteration>Iteration = 58</Iteration>
            <TaskPane>
              {["home", "books", "folder", "palette", "ball", "properties"].map((n, i) => (
                <TaskButton key={n} $active={i === 0} aria-label={n}><Glyph name={n} size={17} /></TaskButton>
              ))}
            </TaskPane>
          </Viewport>
          <RibbonTab>Flow Simulation</RibbonTab>
        </Workspace>

        <TabStrip>
          {pagers.map((d) => (
            <Pager key={d} aria-label="Scroll tabs">
              <Svg width="10" height="10" viewBox="0 0 10 10"><path d={d} fill="currentColor" stroke="currentColor" /></Svg>
            </Pager>
          ))}
          <SheetTab $w={50} $active>Model</SheetTab>
          <SheetTab $w={60}>3D Views</SheetTab>
          <SheetTab $w={96}>Motion Study 1</SheetTab>
        </TabStrip>
        <StatusBar>
          <StatusItem>SOLIDWORKS Premium 2021 SP5.0</StatusItem>
          <Spacer />
          <StatusItem>Under Defined</StatusItem>
          <StatusItem $ml={16}>Editing Assembly</StatusItem>
          <StatusItem $ml={25}><Glyph name="rebuild" size={14} /></StatusItem>
          <StatusItem $ml={74}>IPS</StatusItem>
          <StatusItem $ml={25}><Caret up /></StatusItem>
          <StatusItem $ml={24}><Glyph name="tag" size={15} /></StatusItem>
          <StatusItem $ml={14} />
        </StatusBar>
      </Frame>

      {consoleEdge.map(([y, ch]) => <EdgeText key={y} $y={y}>{ch}</EdgeText>)}
      <SolverStack>
        {runs.map((run, i) => <Solver key={run.label} run={run} shaded={i > 0} />)}
      </SolverStack>
    </Desktop>
  );
}
